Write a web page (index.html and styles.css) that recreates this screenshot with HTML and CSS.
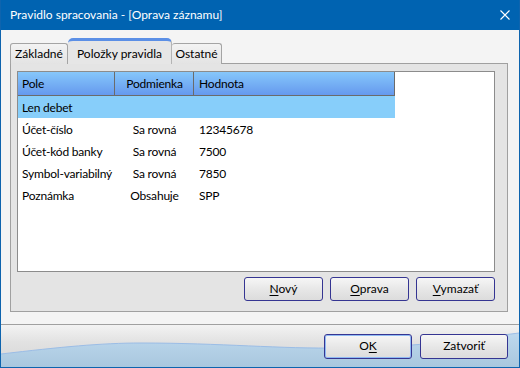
FILE: index.html
```html
<!DOCTYPE html>
<html lang="sk">
<head>
    <meta charset="UTF-8">
    <title>Pravidlo spracovania - [Oprava záznamu]</title>
    <link rel="stylesheet" href="styles.css">
</head>
<body>

<div class="window">
    <div class="titlebar">
        <span class="title">Pravidlo spracovania - [Oprava záznamu]</span>
        <svg class="close" width="10" height="10" viewBox="0 0 10 10">
            <path d="M0.5 0.5 L9.5 9.5 M9.5 0.5 L0.5 9.5" stroke="#fff" stroke-width="1.1" fill="none"/>
        </svg>
    </div>

    <div class="content">
        <div class="tabs">
            <div class="tab tab-first">Základné</div>
            <div class="tab active">Položky pravidla</div>
            <div class="tab tab-last">Ostatné</div>
        </div>

        <div class="panel">
            <div class="list">
                <div class="row head">
                    <div class="cell col-pole">Pole</div>
                    <div class="cell col-cond">Podmienka</div>
                    <div class="cell col-val">Hodnota</div>
                </div>
                <div class="row group">
                    <div class="cell">Len debet</div>
                </div>
                <div class="row">
                    <div class="cell col-pole">Účet-číslo</div>
                    <div class="cell col-cond">Sa rovná</div>
                    <div class="cell col-val">12345678</div>
                </div>
                <div class="row">
                    <div class="cell col-pole">Účet-kód banky</div>
                    <div class="cell col-cond">Sa rovná</div>
                    <div class="cell col-val">7500</div>
                </div>
                <div class="row">
                    <div class="cell col-pole">Symbol-variabilný</div>
                    <div class="cell col-cond">Sa rovná</div>
                    <div class="cell col-val">7850</div>
                </div>
                <div class="row">
                    <div class="cell col-pole">Poznámka</div>
                    <div class="cell col-cond">Obsahuje</div>
                    <div class="cell col-val">SPP</div>
                </div>
            </div>

            <div class="list-actions">
                <button type="button" class="btn"><u>N</u>ový</button>
                <button type="button" class="btn"><u>O</u>prava</button>
                <button type="button" class="btn"><u>V</u>ymazať</button>
            </div>
        </div>
    </div>

    <div class="footer">
        <!-- vlna v pozadí pätičky -->
        <svg class="wave" width="518" height="42" viewBox="0 0 518 42" preserveAspectRatio="none">
            <defs>
                <linearGradient id="waveFill" x1="0" y1="0" x2="0" y2="1">
                    <stop offset="0" stop-color="#bdd8ee"/>
                    <stop offset="1" stop-color="#a9c7de"/>
                </linearGradient>
            </defs>
            <path d="M0 29 C60 22 100 18 140 18 C220 18 280 24 340 23 C420 22 470 14 518 8 L518 42 L0 42 Z" fill="url(#waveFill)"/>
            <path d="M0 29 C60 22 100 18 140 18 C220 18 280 24 340 23 C420 22 470 14 518 8" stroke="#9bbde6" stroke-width="1" fill="none"/>
        </svg>
        <div class="footer-actions">
            <button type="button" class="btn btn-big focused">O<u>K</u></button>
            <button type="button" class="btn btn-big">Zatvoriť</button>
        </div>
    </div>
</div>

</body>
</html>
```

FILE: styles.css
```css
body {
    margin: 0;
    font-family: Lato, "Noto Sans", sans-serif;
    font-size: 12px;
    letter-spacing: -0.2px;
    color: #000;
}
.window {
    width: 520px;
    height: 368px;
    box-sizing: border-box;
    border: 1px solid #0e64ae;
    border-top: none;
    background: #f4f4f4;
    display: flex;
    flex-direction: column;
}
.titlebar {
    height: 30px;
    flex: none;
    background: #0063b1;
    color: #fff;
    display: flex;
    align-items: center;
    justify-content: space-between;
    padding: 0 9px 0 9px;
    font-size: 12px;
    letter-spacing: 0;
}
.title {
    padding-bottom: 1px;
}
.content {
    flex: 1;
    padding: 8px 11px 11px 9px;
    border-bottom: 1px solid #a0a0a0;
}

/* záložky */
.tabs {
    display: flex;
    align-items: flex-end;
    height: 26px;
    position: relative;
    z-index: 1;
}
.tab {
    box-sizing: border-box;
    height: 21px;
    border: 1px solid #a4a4a4;
    border-bottom: none;
    border-radius: 3px 3px 0 0;
    background: linear-gradient(#f3f3f3, #e3e3e3);
    display: flex;
    align-items: center;
    justify-content: center;
    padding-bottom: 1px;
    white-space: nowrap;
    letter-spacing: 0;
}
.tab-first {
    width: 58px;
}
.tab-last {
    width: 50px;
    border-left: none;
}
.tab.active {
    width: 104px;
    height: 26px;
    background: #e6e6e6;
    border-color: #b4b4b4;
    border-top: 3px solid #5b8fe6;
    border-radius: 5px 5px 0 0;
    border-left: none;
    padding-bottom: 0;
    padding-top: 1px;
}
.panel {
    margin-top: -1px;
    height: 249px;
    box-sizing: border-box;
    border: 1px solid #a0a0a0;
    background: #e4e4e4;
    padding: 7px 12px 0 6px;
}

/* zoznam položiek */
.list {
    height: 201px;
    box-sizing: border-box;
    border: 1px solid #8c8c8c;
    background: #fff;
}
.row {
    display: flex;
    height: 22px;
    width: 376px;
}
.cell {
    display: flex;
    align-items: center;
    box-sizing: border-box;
    white-space: nowrap;
}
.col-pole {
    width: 97px;
    padding-left: 4px;
}
.col-cond {
    width: 79px;
    justify-content: center;
}
.col-val {
    width: 200px;
    padding-left: 5px;
}
.row.head {
    height: 23px;
    background: linear-gradient(#86c7fb, #6599ee);
    border-bottom: 1px solid #6b6b6b;
    border-right: 1px solid #6b6b6b;
}
.row.head .col-pole,
.row.head .col-cond {
    border-right: 1px solid #6b6b6b;
}
.row.head .col-cond {
    padding-left: 1px;
}
.row.head .col-val {
    padding-left: 5px;
}
.row.group {
    background: #87cefa;
    width: 377px;
}
.row.group .cell {
    padding-left: 4px;
}

.list-actions {
    display: flex;
    justify-content: flex-end;
    gap: 7px;
    margin-top: 5px;
}
.btn {
    box-sizing: border-box;
    width: 79px;
    height: 24px;
    border: 1px solid #353592;
    border-radius: 3px;
    background: linear-gradient(#f6f6f6, #e6e6e6 55%, #dcdcdc);
    font-family: inherit;
    font-size: 12px;
    letter-spacing: 0;
    color: #000;
    padding: 0 0 2px 0;
}
.btn u {
    text-decoration-thickness: 1px;
    text-underline-offset: 2px;
}

/* pätička */
.footer {
    height: 42px;
    flex: none;
    position: relative;
    background: linear-gradient(#f3f3f3, #e2e2e2 40%, #d6d6d6);
    overflow: hidden;
}
.wave {
    position: absolute;
    left: 0;
    top: 0;
}
.footer-actions {
    position: relative;
    display: flex;
    justify-content: flex-end;
    gap: 8px;
    padding: 9px 11px 0 0;
}
.btn-big {
    width: 88px;
    height: 25px;
}
.focused {
    box-shadow: inset 0 0 0 1px #8fb9f2;
}
```
